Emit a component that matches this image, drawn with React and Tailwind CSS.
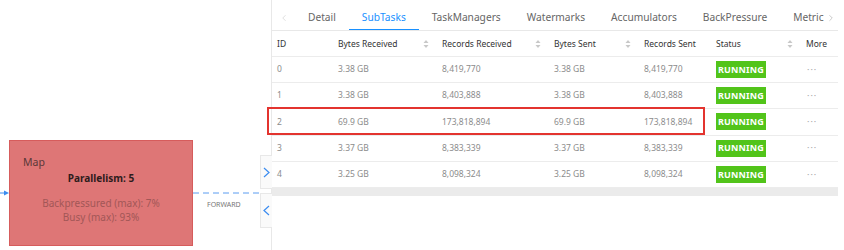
import { ChevronLeft, ChevronRight } from 'lucide-react'

const TABS = ['Detail', 'SubTasks', 'TaskManagers', 'Watermarks', 'Accumulators', 'BackPressure', 'Metric']

const COLS = [
  { key: 'id', label: 'ID', w: 'w-[58px]', pad: 'pl-[5px]' },
  { key: 'br', label: 'Bytes Received', w: 'w-[104px]', pad: 'pl-[8px]', sort: true },
  { key: 'rr', label: 'Records Received', w: 'w-[112px]', pad: 'pl-[8px]', sort: true },
  { key: 'bs', label: 'Bytes Sent', w: 'w-[90px]', pad: 'pl-[8px]', sort: true },
  { key: 'rs', label: 'Records Sent', w: 'w-[72px]', pad: 'pl-[8px]' },
  { key: 'status', label: 'Status', w: 'w-[90px]', pad: 'pl-[8px]', sort: true },
  { key: 'more', label: 'More', w: 'w-[40px]', pad: 'pl-[8px]' },
]

const ROWS = [
  { id: 0, br: '3.38 GB', rr: '8,419,770', bs: '3.38 GB', rs: '8,419,770' },
  { id: 1, br: '3.38 GB', rr: '8,403,888', bs: '3.38 GB', rs: '8,403,888' },
  { id: 2, br: '69.9 GB', rr: '173,818,894', bs: '69.9 GB', rs: '173,818,894' },
  { id: 3, br: '3.37 GB', rr: '8,383,339', bs: '3.37 GB', rs: '8,383,339' },
  { id: 4, br: '3.25 GB', rr: '8,098,324', bs: '3.25 GB', rs: '8,098,324' },
]

function Sorter() {
  return (
    <svg width="6" height="9" viewBox="0 0 6 9" className="absolute right-[5px] top-1/2 -translate-y-1/2">
      <path d="M3 0.5 L5.5 3.5 L0.5 3.5 Z" fill="#c8c8c8" />
      <path d="M3 8.5 L5.5 5.5 L0.5 5.5 Z" fill="#c8c8c8" />
    </svg>
  )
}

// thin chevron used on the drawer toggles
function Chevron({ dir }) {
  return (
    <svg width="7" height="11" viewBox="0 0 7 11" className="shrink-0">
      <polyline
        points={dir === 'right' ? '1,1 6,5.5 1,10' : '6,1 1,5.5 6,10'}
        fill="none"
        stroke="#3b8cf0"
        strokeWidth="1.2"
      />
    </svg>
  )
}

function Cell({ col, row }) {
  if (col.key === 'status') {
    return (
      <span className="inline-flex items-center justify-center w-[50px] h-[17px] bg-[#52c41a] text-white font-bold text-[9px] tracking-[0.2px]">
        RUNNING
      </span>
    )
  }
  if (col.key === 'more') {
    return <span className="pl-[1px] text-[#aaa] text-[9px] tracking-[1px]">···</span>
  }
  return <span>{row[col.key]}</span>
}

export default function App() {
  return (
    <div
      className="relative w-[844px] h-[250px] overflow-hidden bg-white flex"
      style={{ fontFamily: '"Noto Sans", "Open Sans", sans-serif' }}
    >
      {/* Graph canvas */}
      <div className="relative w-[272px] h-full border-r border-[#e8e8e8] shrink-0">
        {/* incoming edge */}
        <svg width="10" height="8" className="absolute left-0 top-[189px]">
          <line x1="0" y1="4" x2="6" y2="4" stroke="#3b8cf0" strokeWidth="1" />
          <path d="M4 1.5 L9 4 L4 6.5 Z" fill="#3b8cf0" />
        </svg>

        {/* node */}
        <div className="absolute left-[9px] top-[140px] w-[184px] h-[106px] bg-[#de7676] border-[1.5px] border-[#d65c5c]">
          <p className="absolute left-[13px] top-[16px] text-[10.5px] text-[#5b3838] leading-none">Map</p>
          <p className="absolute left-0 right-0 top-[32px] text-center text-[10px] font-bold text-[#2e1c1c] leading-none">
            Parallelism: 5
          </p>
          <p className="absolute left-0 right-0 top-[57px] text-center text-[10px] text-[#a25757] leading-none">
            Backpressured (max): 7%
          </p>
          <p className="absolute left-0 right-0 top-[71px] text-center text-[10px] text-[#a25757] leading-none">
            Busy (max): 93%
          </p>
        </div>

        {/* outgoing edge */}
        <svg width="68" height="4" className="absolute left-[193px] top-[191px]">
          <line x1="0" y1="2" x2="68" y2="2" stroke="#5a9cf0" strokeWidth="1" strokeDasharray="6 4" />
        </svg>
        <span className="absolute left-[207px] top-[201px] text-[7px] text-[#777] leading-none">FORWARD</span>

        {/* drawer toggles */}
        <div className="absolute left-[260px] top-[155px] flex flex-col gap-[4px]">
          <button className="w-[12px] h-[34px] bg-[#fafafa] border border-r-0 border-[#e8e8e8] flex items-center justify-center">
            <Chevron dir="right" />
          </button>
          <button className="w-[12px] h-[35px] bg-[#fafafa] border border-r-0 border-[#e8e8e8] flex items-center justify-center">
            <Chevron dir="left" />
          </button>
        </div>
      </div>

      {/* Detail drawer */}
      <div className="flex-1 min-w-0 flex flex-col">
        {/* tabs */}
        <div className="h-[31px] w-[566px] border-b border-[#e8e8e8] flex items-stretch shrink-0">
          <div className="w-[23px] flex items-center justify-center pt-[5px] shrink-0">
            <ChevronLeft size={10} strokeWidth={1.5} className="text-[#ccc]" />
          </div>
          <div className="flex-1 min-w-0 overflow-hidden flex items-stretch">
            {TABS.map((t) => (
              <div
                key={t}
                className={
                  t === 'SubTasks'
                    ? 'relative px-[13px] flex items-center pt-[6px] text-[10.2px] text-[#1890ff] whitespace-nowrap'
                    : 'relative px-[13px] last:pr-0 flex items-center pt-[6px] text-[10.2px] text-[#666] whitespace-nowrap'
                }
              >
                {t}
                {t === 'SubTasks' && <span className="absolute left-0 right-0 bottom-[-1px] h-[2px] bg-[#1890ff]" />}
              </div>
            ))}
          </div>
          <div className="w-[12px] flex items-center justify-start pt-[5px] shrink-0">
            <ChevronRight size={10} strokeWidth={1.5} className="text-[#aaa]" />
          </div>
        </div>

        {/* table */}
        <div className="w-[566px] text-[8.5px]">
          <div className="flex h-[26px] border-b border-[#ececec] text-[#333]">
            {COLS.map((c) => (
              <div key={c.key} className={`relative ${c.w} ${c.pad} flex items-center pt-[1px] shrink-0 whitespace-nowrap`}>
                {c.label}
                {c.sort && <Sorter />}
              </div>
            ))}
          </div>
          {ROWS.map((r) => (
            <div key={r.id} className="flex h-[26.2px] border-b border-[#ececec] text-[#8c8c8c]">
              {COLS.map((c) => (
                <div key={c.key} className={`${c.w} ${c.pad} flex items-center shrink-0 whitespace-nowrap`}>
                  <Cell col={c} row={r} />
                </div>
              ))}
            </div>
          ))}
          {/* horizontal scrollbar */}
          <div className="h-[8px] bg-[#ebebeb]" />
        </div>
      </div>

      {/* highlight overlay */}
      <div className="absolute left-[267px] top-[107px] w-[438px] h-[28px] border-2 border-[#e3342f] pointer-events-none" />
    </div>
  )
}
